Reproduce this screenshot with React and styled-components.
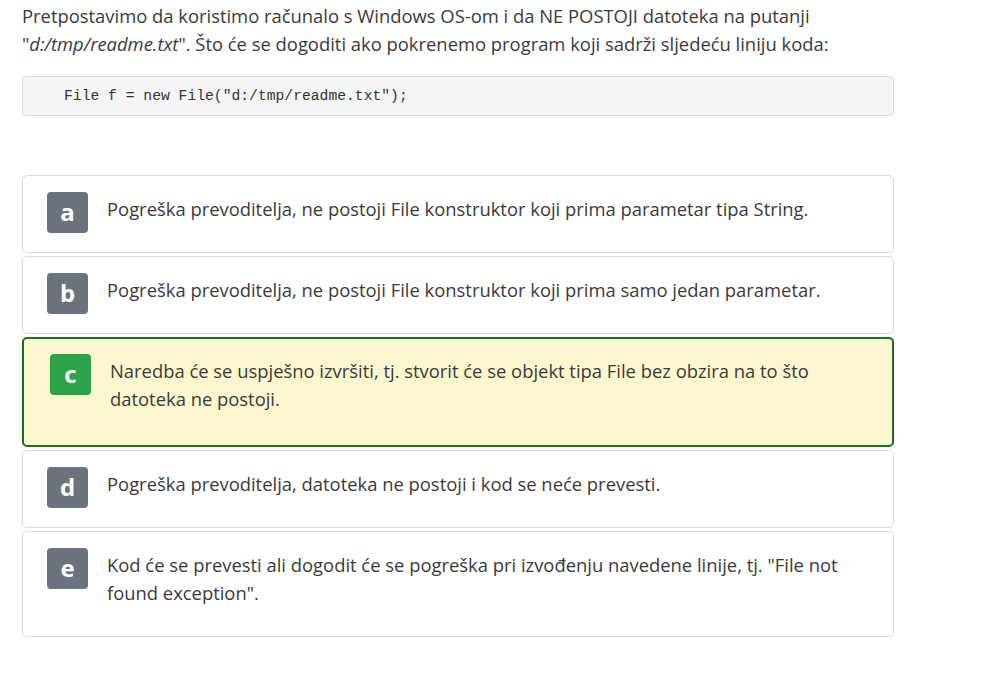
import React from "react";
import styled, { createGlobalStyle } from "styled-components";

const GlobalStyle = createGlobalStyle`
  body {
    margin: 0;
    background: #fff;
    font-family: "Open Sans", "Noto Sans", sans-serif;
    color: #3a3a3a;
  }
`;

const Page = styled.div`
  width: 872px;
  padding: 2px 0 0 22px;
`;

const Question = styled.p`
  margin: 0 0 18px;
  font-size: 18.4px;
  line-height: 28px;
`;

const Code = styled.pre`
  margin: 0 0 59px;
  height: 40px;
  box-sizing: border-box;
  padding: 0 0 0 41px;
  display: flex;
  align-items: center;
  background: #f5f5f5;
  border: 1px solid #dcdcdc;
  border-radius: 4px;
  font-family: "Liberation Mono", monospace;
  font-size: 14.7px;
  color: #333;
`;

const Options = styled.div`
  display: flex;
  flex-direction: column;
  gap: 3px;
`;

const Option = styled.div`
  display: flex;
  gap: 19px;
  padding: ${(p) => (p.selected ? "15px 22px 19px 26px" : "16px 24px")};
  border: ${(p) => (p.selected ? "2px solid #1f6e1f" : "1px solid #d9d9d9")};
  border-radius: 5px;
  background: ${(p) => (p.selected ? "#fdf7d0" : "#fff")};
`;

const Badge = styled.div`
  flex: none;
  width: 41px;
  height: 41px;
  border-radius: 4px;
  display: flex;
  align-items: center;
  justify-content: center;
  background: ${(p) => (p.selected ? "#2ca24a" : "#6c737d")};
  color: #fff;
  font-weight: 700;
  font-size: 24px;
  padding-bottom: 3px;
  box-sizing: border-box;
`;

const Answer = styled.div`
  padding-top: 3px;
  margin-bottom: 13px;
  font-size: 18.4px;
  line-height: 28px;
`;

const answers = [
  { key: "a", text: "Pogreška prevoditelja, ne postoji File konstruktor koji prima parametar tipa String." },
  { key: "b", text: "Pogreška prevoditelja, ne postoji File konstruktor koji prima samo jedan parametar." },
  {
    key: "c",
    text: "Naredba će se uspješno izvršiti, tj. stvorit će se objekt tipa File bez obzira na to što datoteka ne postoji.",
    selected: true,
  },
  { key: "d", text: "Pogreška prevoditelja, datoteka ne postoji i kod se neće prevesti." },
  {
    key: "e",
    text: 'Kod će se prevesti ali dogodit će se pogreška pri izvođenju navedene linije, tj. "File not found exception".',
  },
];

const App = () => {
  return (
    <>
      <GlobalStyle />
      <Page>
        <Question>
          {"Pretpostavimo da koristimo računalo s Windows OS-om i da NE POSTOJI datoteka na putanji \""}
          <em>d:/tmp/readme.txt</em>
          {"\". Što će se dogoditi ako pokrenemo program koji sadrži sljedeću liniju koda:"}
        </Question>
        <Code>File f = new File("d:/tmp/readme.txt");</Code>
        <Options>
          {answers.map((a) => (
            <Option key={a.key} selected={a.selected}>
              <Badge selected={a.selected}>{a.key}</Badge>
              <Answer>{a.text}</Answer>
            </Option>
          ))}
        </Options>
      </Page>
    </>
  );
};

export default App;
